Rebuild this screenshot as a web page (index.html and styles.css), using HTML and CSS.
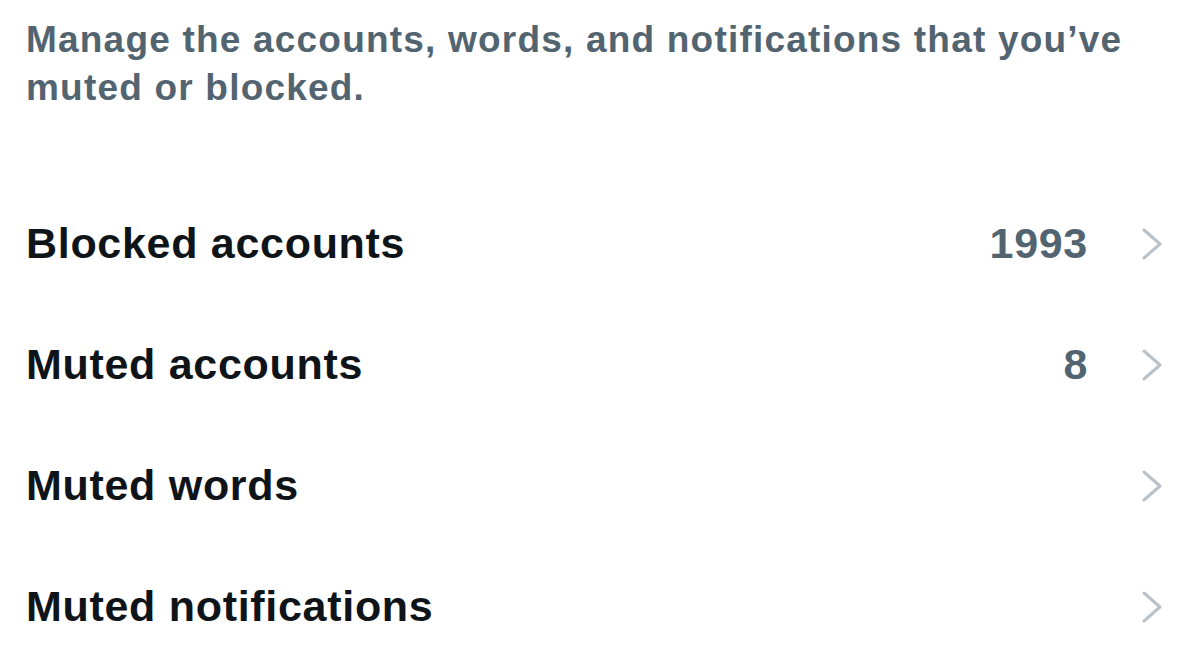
FILE: index.html
```html
<!DOCTYPE html>
<html>
<head>
<meta charset="utf-8">
<link rel="stylesheet" href="styles.css">
</head>
<body>
<div class="page">
  <p class="intro">Manage the accounts, words, and notifications that you’ve muted or blocked.</p>
  <ul class="list">
    <li class="row"><span class="label">Blocked accounts</span><span class="count">1993</span><svg class="chev" viewBox="0 0 20 32"><path d="M2 2 L18 16 L2 30"/></svg></li>
    <li class="row"><span class="label">Muted accounts</span><span class="count">8</span><svg class="chev" viewBox="0 0 20 32"><path d="M2 2 L18 16 L2 30"/></svg></li>
    <li class="row"><span class="label">Muted words</span><span class="count"></span><svg class="chev" viewBox="0 0 20 32"><path d="M2 2 L18 16 L2 30"/></svg></li>
    <li class="row"><span class="label">Muted notifications</span><span class="count"></span><svg class="chev" viewBox="0 0 20 32"><path d="M2 2 L18 16 L2 30"/></svg></li>
  </ul>
</div>
</body>
</html>
```
FILE: styles.css
```css
html, body {
  margin: 0;
  padding: 0;
  background: #ffffff;
}
.page {
  width: 1200px;
  height: 671px;
  overflow: hidden;
  font-family: "Liberation Sans", Arial, sans-serif;
  box-sizing: border-box;
  padding: 16px 38px 0 26px;
}
.intro {
  margin: 0;
  font-size: 37px;
  line-height: 48px;
  font-weight: 700;
  letter-spacing: 1.2px;
  color: #536471;
  max-width: 1120px;
}
.list {
  list-style: none;
  margin: 71px 0 0 0;
  padding: 0;
}
.row {
  display: flex;
  align-items: center;
  height: 121px;
}
.label {
  flex: 1;
  font-size: 43px;
  font-weight: 700;
  letter-spacing: 0.7px;
  color: #0f1419;
}
.count {
  font-size: 43px;
  font-weight: 700;
  letter-spacing: 0.7px;
  color: #536471;
  margin-right: 54px;
}
.chev {
  width: 20px;
  height: 32px;
  flex: none;
}
.chev path {
  fill: none;
  stroke: #b9c1c9;
  stroke-width: 3;
  stroke-linecap: round;
  stroke-linejoin: round;
}
```
